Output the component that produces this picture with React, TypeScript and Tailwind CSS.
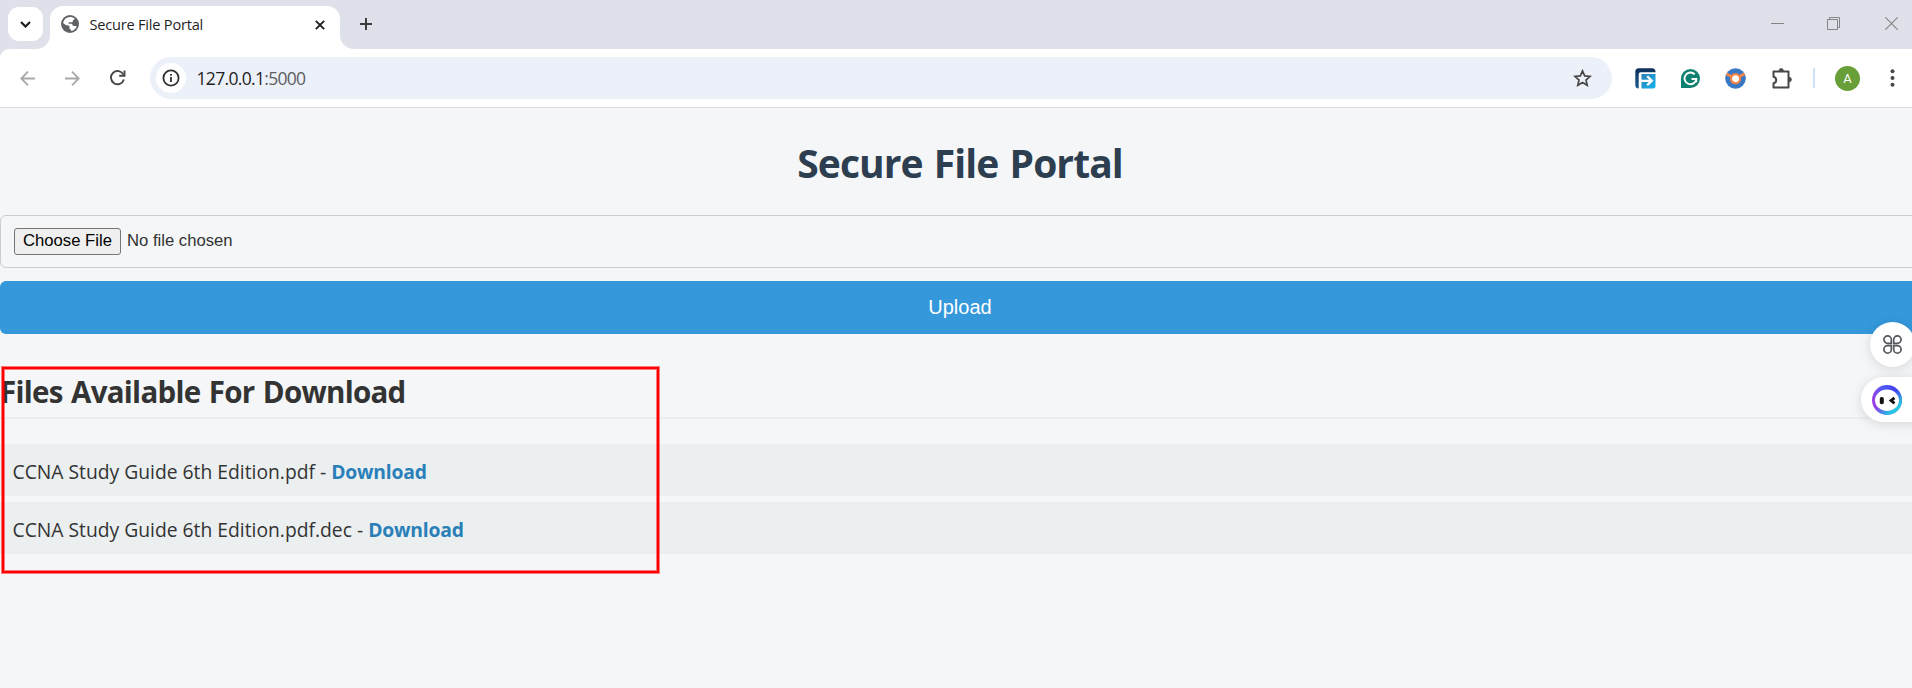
import React from "react";

const SEGOE = "font-['Open_Sans','Noto_Sans',sans-serif]";
const ARIAL = "font-['Liberation_Sans',Arial,sans-serif]";

function TabStrip() {
  return (
    <div className="flex h-[49px] w-[1912px] items-start bg-[#dee1e9]">
      <div className="flex w-[50px] shrink-0 pl-2 pt-[7px]">
        <button className="flex h-[34px] w-[35px] items-center justify-center rounded-[11px] bg-white" aria-label="Search tabs">
          <svg width="11" height="7" viewBox="0 0 11 7" fill="none" stroke="#1f1f1f" strokeWidth="2.2">
            <path d="M1 1l4.5 4.5L10 1" />
          </svg>
        </button>
      </div>
      <div className="relative mt-1.5 flex h-[43px] w-[290px] shrink-0 items-start rounded-t-[13px] bg-white pl-[11px] pt-[9px]">
        <svg className="absolute -left-[14px] bottom-0" width="14" height="14" viewBox="0 0 14 14">
          <path d="M14 0v14H0A14 14 0 0 0 14 0z" fill="#fff" />
        </svg>
        <svg className="absolute -right-[14px] bottom-0" width="14" height="14" viewBox="0 0 14 14">
          <path d="M0 0v14h14A14 14 0 0 1 0 0z" fill="#fff" />
        </svg>
        <svg width="18" height="18" viewBox="0 0 18 18">
          <circle cx="9" cy="9" r="9" fill="#5f6368" />
          <path d="M9.2 2c1.8 0 3.4.6 4.600 1.700-.5.3-.5.9-1 1.100-.8.2-1 .8-1 1.400 0 .9-.8 1.100-1.600 1.100H8c-.4 0-.6.3-.6.700 0 .5.3.7.8.7h2c1 0 1.400.7 1.400 1.400 0 .6.5.8 1 .8h3.100a7.100 7.100 0 0 1-5.500 5c-.1-.7 0-1.200-.6-1.500-.8-.3-1.100-.7-1.100-1.500v-1c0-1-.6-1.500-1.500-1.500-1.900 0-3.200-1-4.900-2.500A7 7 0 0 1 9.200 2z" fill="#fff" />
          <path d="M2 9.200c1 .8 2.400 1.500 3.600 1.500 1.300 0 1.700.6 1.700 1.600 0 1.200.8 1.500 1 3.600A7 7 0 0 1 2 9.200z" fill="#5f6368" />
        </svg>
        <span className={`ml-[10.500px] w-[123.500px] whitespace-nowrap text-[14.600px] leading-[19px] tracking-[-0.220px] text-[#1f1f1f] ${SEGOE}`}>Secure File Portal</span>
        <svg className="ml-[102px] mt-[4.500px]" width="10" height="10" viewBox="0 0 10 10" stroke="#1f1f1f" strokeWidth="1.900">
          <path d="M.8.8l8.400 8.400M9.200.8L.8 9.200" />
        </svg>
      </div>
      <svg className="ml-[20px] mt-[18px]" width="12" height="12" viewBox="0 0 12 12" stroke="#3c3c3c" strokeWidth="2">
        <path d="M6 0v12M0 6h12" />
      </svg>
      <div className="ml-auto mt-[17px] flex pr-[14px]">
        <svg width="13" height="13" viewBox="0 0 13 13" stroke="#858585"><path d="M0 6.500h13" /></svg>
        <svg className="ml-[43px]" width="13" height="13" viewBox="0 0 13 13" fill="none" stroke="#858585">
          <path d="M.5 2.500h10v10H.5zM2.500 2.500v-2h10v10h-2" />
        </svg>
        <svg className="ml-[45px]" width="13" height="13" viewBox="0 0 13 13" stroke="#858585" strokeWidth="1.100"><path d="M.3.3l12.400 12.400M12.700.3L.3 12.700" /></svg>
      </div>
    </div>
  );
}

function Toolbar() {
  return (
    <div className="bg-[#dee1e9]">
      <div className="flex h-[59px] w-[1912px] items-start rounded-tl-[9px] border-b border-[#dddfe3] bg-white pt-2">
        <div className="flex h-[42px] w-[150px] items-center pl-5">
          <svg width="15" height="15" viewBox="0 0 15 15" fill="none" stroke="#a8a9ab" strokeWidth="1.800"><path d="M15 7.500H1.500M8 .7L1.300 7.500 8 14.300" /></svg>
          <svg className="ml-[30px]" width="15" height="15" viewBox="0 0 15 15" fill="none" stroke="#a8a9ab" strokeWidth="1.800"><path d="M0 7.500h13.500M7 .7l6.700 6.800L7 14.300" /></svg>
          <svg className="ml-[30px]" width="16" height="16" viewBox="0 0 16 16" fill="none" stroke="#474747" strokeWidth="1.900">
            <path d="M13.900 9.500A6.600 6.600 0 1 1 13.500 4.700" />
            <path d="M14.500.5v5.300H9.200" />
          </svg>
        </div>
        <div className="flex h-[42px] w-[1462px] items-center rounded-full bg-[#ecf0f9] pl-1.5 pr-[20px]">
          <div className="flex size-[30px] items-center justify-center rounded-full bg-white">
            <svg width="18" height="18" viewBox="0 0 18 18" fill="none" stroke="#303030">
              <circle cx="9" cy="9" r="7.600" strokeWidth="1.800" />
              <path d="M9 8v5M9 4.900v1.800" strokeWidth="1.800" />
            </svg>
          </div>
          <span className={`ml-[10.500px] whitespace-nowrap text-[17.500px] leading-6 tracking-[-0.680px] text-[#1f1f1f] ${SEGOE}`}>
            127.0.0.1<span className="text-[#5c5e62]">:5000</span>
          </span>
          <svg className="ml-auto" width="19" height="18" viewBox="0 0 19 18" fill="none" stroke="#474747" strokeWidth="1.700">
            <path d="M9.500 1.900l2.200 5 5.400.5-4.100 3.600 1.200 5.300-4.700-2.800-4.700 2.800L6 11 1.900 7.400l5.400-.5z" />
          </svg>
        </div>
        <div className="flex h-[42px] flex-1 items-center">
          <svg className="ml-[23px]" width="21" height="21" viewBox="0 0 21 21">
            <defs>
              <linearGradient id="frame" x1="0" y1="0" x2="0" y2="1">
                <stop offset="0" stopColor="#0d2f5a" /><stop offset="1" stopColor="#1c5c8e" />
              </linearGradient>
              <linearGradient id="panel" x1="0" y1="0" x2="1" y2="1">
                <stop offset="0" stopColor="#2a7fb3" /><stop offset="1" stopColor="#16b4f0" />
              </linearGradient>
            </defs>
            <rect x=".3" y=".3" width="20.200" height="20.200" rx="3.500" fill="url(#frame)" />
            <path d="M3.700 21V6.200A2 2 0 0 1 5.700 4.200H21V21z" fill="#fff" />
            <path d="M6.500 6h14v12a2.500 2.500 0 0 1-2.500 2.500H6.500z" fill="url(#panel)" />
            <path d="M6 12.800h11M12.200 8.300l4.600 4.500-4.600 4.500" fill="none" stroke="#fff" strokeWidth="2.300" />
          </svg>
          <svg className="ml-[25px]" width="19" height="19" viewBox="0 0 19 19">
            <path d="M9.500 0a9.500 9.500 0 1 1 0 19H0V9.500A9.500 9.500 0 0 1 9.500 0z" fill="#0f8070" />
            <path d="M13.700 5.300A5.900 5.900 0 1 0 15.300 10H10.500M15.300 10v3.200" fill="none" stroke="#fff" strokeWidth="1.900" />
          </svg>
          <svg className="ml-[25px]" width="21" height="21" viewBox="0 0 21 21">
            <circle cx="10.500" cy="10.500" r="10.300" fill="#3a78c3" />
            <path d="M1.400 6l6.300 3M19.600 6l-6.300 3" stroke="#f58549" strokeWidth="2.600" />
            <circle cx="10.500" cy="10.700" r="4.500" fill="#fff" stroke="#f58549" strokeWidth="2.200" />
          </svg>
          <svg className="ml-[25px]" width="21" height="21" viewBox="0 0 21 21">
            <path d="M2.500 3.500h15v16h-15v-4.200c2.300-.4 2.700-1.800 2.700-3.300S4.800 9.100 2.500 8.700z" fill="none" stroke="#474747" strokeWidth="2" strokeLinejoin="round" />
            <path d="M8 2.800a2.200 2.200 0 0 1 4.400 0zM18.200 9.300a2.200 2.200 0 0 1 0 4.400z" fill="#474747" stroke="#474747" strokeWidth=".8" />
          </svg>
          <div className="ml-[21px] h-5 w-0.5 bg-[#d0e0fb]" />
          <div className={`ml-[20px] flex size-[25px] items-center justify-center rounded-full bg-[#689f38] text-[13px] leading-none text-white font-['Roboto',sans-serif]`}>A</div>
          <svg className="ml-[30px]" width="5" height="18" viewBox="0 0 5 18" fill="#474747">
            <circle cx="2.500" cy="2.200" r="2" /><circle cx="2.500" cy="9" r="2" /><circle cx="2.500" cy="15.800" r="2" />
          </svg>
        </div>
      </div>
    </div>
  );
}

function FileRow({ name }: { name: string }) {
  return (
    <li className="flex h-[52px] items-center bg-[#ebeff0] pl-[12.500px]">
      <span className="whitespace-pre pt-0.5 text-[19.300px] leading-[27px]">
        {name} - <a href="#" className="font-bold tracking-[-0.200px] text-[#2980b9]">Download</a>
      </span>
    </li>
  );
}

function Portal() {
  return (
    <main className={`flex w-[1920px] flex-1 flex-col bg-[#f4f6f8] text-[#333] ${SEGOE}`}>
      <h1 className="mt-[28px] h-[54px] text-center text-[39px] font-bold leading-[54px] tracking-[-0.930px] [word-spacing:2px] text-[#2c3e50]">Secure File Portal</h1>
      <div className={`mt-[25px] flex h-[53px] items-start rounded-md border border-[#ccc] pl-[13px] pt-3 ${ARIAL}`}>
        <button className="h-[27px] w-[107px] rounded-[3px] border border-[#767676] bg-[#efefef] pb-0.5 text-[16.670px] leading-[23px] text-black">Choose File</button>
        <span className="ml-[6px] text-[16.670px] leading-[25px]">No file chosen</span>
      </div>
      <button className={`mt-[13px] h-[53px] rounded-md bg-[#3498db] pb-px text-[20px] leading-[52px] text-white ${ARIAL}`}>Upload</button>
      <h2 className="mt-[33px] h-[52px] border-b-2 border-[#ebeeef] text-[29.500px] font-bold leading-[50px] tracking-[-0.720px] [word-spacing:1.400px]">Files Available For Download</h2>
      <ul className="mt-[25px] flex flex-col gap-1.5">
        <FileRow name="CCNA Study Guide 6th Edition.pdf" />
        <FileRow name="CCNA Study Guide 6th Edition.pdf.dec" />
      </ul>
    </main>
  );
}

function FloatingTools() {
  return (
    <>
      <div className="absolute left-[1870px] top-[322px] flex size-[45px] items-center justify-center rounded-full bg-white shadow-[0_2px_12px_rgba(0,0,0,0.13)]">
        <svg width="19" height="19" viewBox="0 0 19 19" fill="none" stroke="#55575e" strokeWidth="1.700">
          <path d="M8.300 8.300H4.600a3.700 3.700 0 1 1 3.700-3.700zM10.700 8.300V4.600a3.700 3.700 0 1 1 3.700 3.700zM8.300 10.700v3.700a3.700 3.700 0 1 1-3.700-3.700zM10.700 10.700h3.700a3.700 3.700 0 1 1-3.700 3.700z" />
        </svg>
      </div>
      <div className="absolute left-[1861px] top-[377px] flex h-[45px] w-[60px] items-center rounded-l-full bg-white pl-[11px] shadow-[0_2px_12px_rgba(0,0,0,0.13)]">
        <svg width="30" height="30" viewBox="0 0 30 30">
          <defs>
            <linearGradient id="ring" x1="0" y1=".65" x2="1" y2=".5">
              <stop offset="0" stopColor="#a73be0" /><stop offset=".45" stopColor="#4d5bf5" /><stop offset="1" stopColor="#3f35f0" />
            </linearGradient>
            <linearGradient id="glow" x1=".45" y1=".5" x2=".9" y2=".95">
              <stop offset="0" stopColor="#28c8e0" stopOpacity="0" /><stop offset=".7" stopColor="#28c8e0" />
            </linearGradient>
          </defs>
          <circle cx="15" cy="15" r="15" fill="url(#ring)" />
          <circle cx="15" cy="15" r="15" fill="url(#glow)" />
          <ellipse cx="15" cy="15.300" rx="12" ry="10.700" fill="#fff" />
          <rect x="7.800" y="12" width="4" height="7.200" rx="1.800" fill="#111" />
          <path d="M22.500 12.800l-3.500 2.800 3.500 2.700" fill="none" stroke="#111" strokeWidth="2.800" />
        </svg>
      </div>
    </>
  );
}

export default function App() {
  return (
    <div className="relative flex h-[688px] w-[1912px] flex-col overflow-hidden bg-[#f4f6f8]">
      <TabStrip />
      <Toolbar />
      <Portal />
      <div className="absolute left-[2px] top-[367px] h-[206px] w-[657px] border-2 border-[#ff0000] shadow-[0_0_0_1px_rgba(255,0,0,0.5),inset_0_0_0_1px_rgba(255,0,0,0.5)]" />
      <FloatingTools />
    </div>
  );
}
